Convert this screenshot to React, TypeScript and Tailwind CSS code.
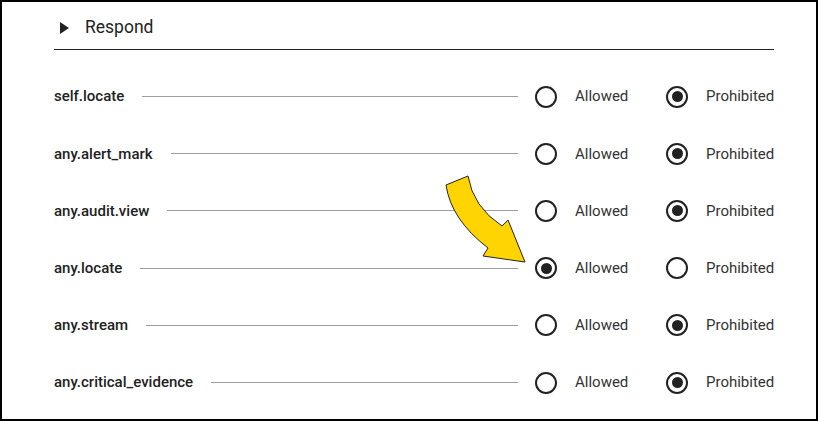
const rows = [
  { name: 'self.locate', allowed: false },
  { name: 'any.alert_mark', allowed: false },
  { name: 'any.audit.view', allowed: false },
  { name: 'any.locate', allowed: true },
  { name: 'any.stream', allowed: false },
  { name: 'any.critical_evidence', allowed: false },
];

const Radio = ({ checked }: { checked: boolean }) => (
  <span className="flex h-[22px] w-[22px] shrink-0 items-center justify-center rounded-full border-2 border-[#222]">
    {checked && <span className="h-[11px] w-[11px] rounded-full bg-[#222]" />}
  </span>
);

export default function App() {
  return (
    <div className="relative h-[421px] w-[818px] overflow-hidden border-2 border-black bg-white font-['Roboto',sans-serif]">
      <div className="pl-[52px] pr-[42px]">
        <div className="flex h-[48px] items-center border-b border-[#222] pt-[4px]">
          <svg width="9" height="12" viewBox="0 0 9 12" className="ml-[6px]">
            <path d="M0 0 L9 6 L0 12 Z" fill="#222" />
          </svg>
          <span className="ml-[16px] text-[17.5px] text-[#222]">Respond</span>
        </div>
        <div className="pt-[18px]">
          {rows.map((r) => (
            <div key={r.name} className="flex h-[57.2px] items-center">
              <span className="text-[15px] font-medium text-[#222]">{r.name}</span>
              <span className="ml-[18px] mr-[17px] h-px flex-1 bg-[#9e9e9e]" />
              <label className="flex w-[131px] items-center">
                <Radio checked={r.allowed} />
                <span className="ml-[18px] text-[15px] text-[#333]">Allowed</span>
              </label>
              <label className="flex w-[108px] items-center">
                <Radio checked={!r.allowed} />
                <span className="ml-[18px] text-[15px] text-[#333]">Prohibited</span>
              </label>
            </div>
          ))}
        </div>
      </div>
      <svg
        className="pointer-events-none absolute left-[-2px] top-[-2px]"
        width="818"
        height="421"
        viewBox="0 0 818 421"
      >
        <path
          d="M446 185 L468 176 Q473 207 502 226 L508 220 L525 262 L483 256 L488 248 Q451 219.5 446 185 Z"
          fill="#FFD400"
          stroke="#222"
          strokeWidth="1"
        />
      </svg>
    </div>
  );
}
